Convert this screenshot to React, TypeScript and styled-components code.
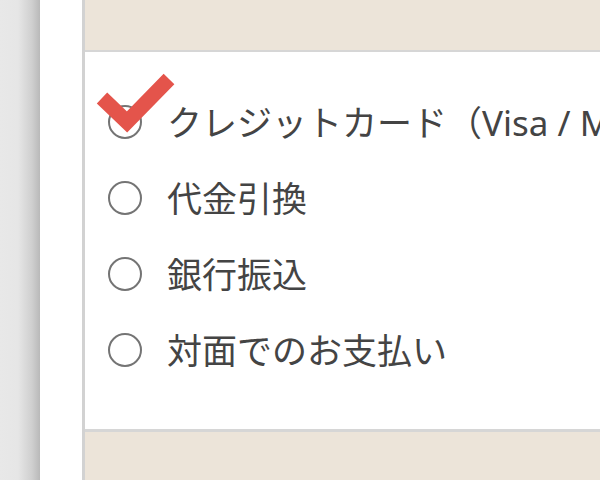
import React from 'react';
import styled, { createGlobalStyle } from 'styled-components';

const GlobalStyle = createGlobalStyle`
  html, body {
    margin: 0;
    padding: 0;
    width: 600px;
    height: 480px;
    overflow: hidden;
    background: #ffffff;
  }
  * {
    box-sizing: border-box;
  }
`;

const Page = styled.div`
  display: flex;
  width: 600px;
  height: 480px;
  font-family: 'Noto Sans', 'Noto Sans CJK JP', sans-serif;
`;

const Sidebar = styled.div`
  width: 40px;
  flex-shrink: 0;
  background: linear-gradient(to right, #e8e8e8 0%, #e6e6e6 45%, #cfcfcf 80%, #b9b9b9 100%);
`;

const Gutter = styled.div`
  width: 42px;
  flex-shrink: 0;
  background: #ffffff;
`;

const Panel = styled.section`
  flex: 1;
  display: flex;
  flex-direction: column;
  min-width: 0;
  border-left: 3px solid #d2d2d2;
  overflow: hidden;
`;

const Band = styled.div<{ $edge: 'top' | 'bottom' }>`
  flex-shrink: 0;
  height: ${({ $edge }) => ($edge === 'top' ? '52px' : '51px')};
  background: #ece4d9;
  ${({ $edge }) =>
    $edge === 'top'
      ? 'border-bottom: 2px solid #d6d6d6;'
      : 'border-top: 3px solid #d6d6d6;'}
`;

const OptionList = styled.ul`
  flex: 1;
  list-style: none;
  margin: 0;
  padding: 32px 0 0 23px;
`;

const Option = styled.li`
  position: relative;
  display: flex;
  align-items: center;
  gap: 25px;
  height: 76px;
  white-space: nowrap;
`;

const Radio = styled.span`
  flex-shrink: 0;
  width: 34px;
  height: 34px;
  border-radius: 50%;
  border: 2.5px solid #747474;
  background: #ffffff;
`;

const Label = styled.span`
  font-size: 35px;
  font-weight: 400;
  line-height: 1;
  color: #444444;
`;

const Check = styled.svg`
  position: absolute;
  left: -13px;
  top: -12px;
  width: 82px;
  height: 64px;
  overflow: visible;
`;

const options = [
  'クレジットカード（Visa / MasterCard / JCB）',
  '代金引換',
  '銀行振込',
  '対面でのお支払い',
];

const App = () => {
  return (
    <>
      <GlobalStyle />
      <Page>
        <Sidebar />
        <Gutter />
        <Panel>
          <Band $edge="top" />
          <OptionList>
            {options.map((label, i) => (
              <Option key={label}>
                <Radio />
                <Label>{label}</Label>
                {i === 0 && (
                  <Check viewBox="0 0 82 64">
                    <polyline
                      points="7,26 32,50 74,7"
                      fill="none"
                      stroke="#e4544b"
                      strokeWidth="15"
                      strokeLinejoin="miter"
                      strokeLinecap="butt"
                    />
                  </Check>
                )}
              </Option>
            ))}
          </OptionList>
          <Band $edge="bottom" />
        </Panel>
      </Page>
    </>
  );
};

export default App;
